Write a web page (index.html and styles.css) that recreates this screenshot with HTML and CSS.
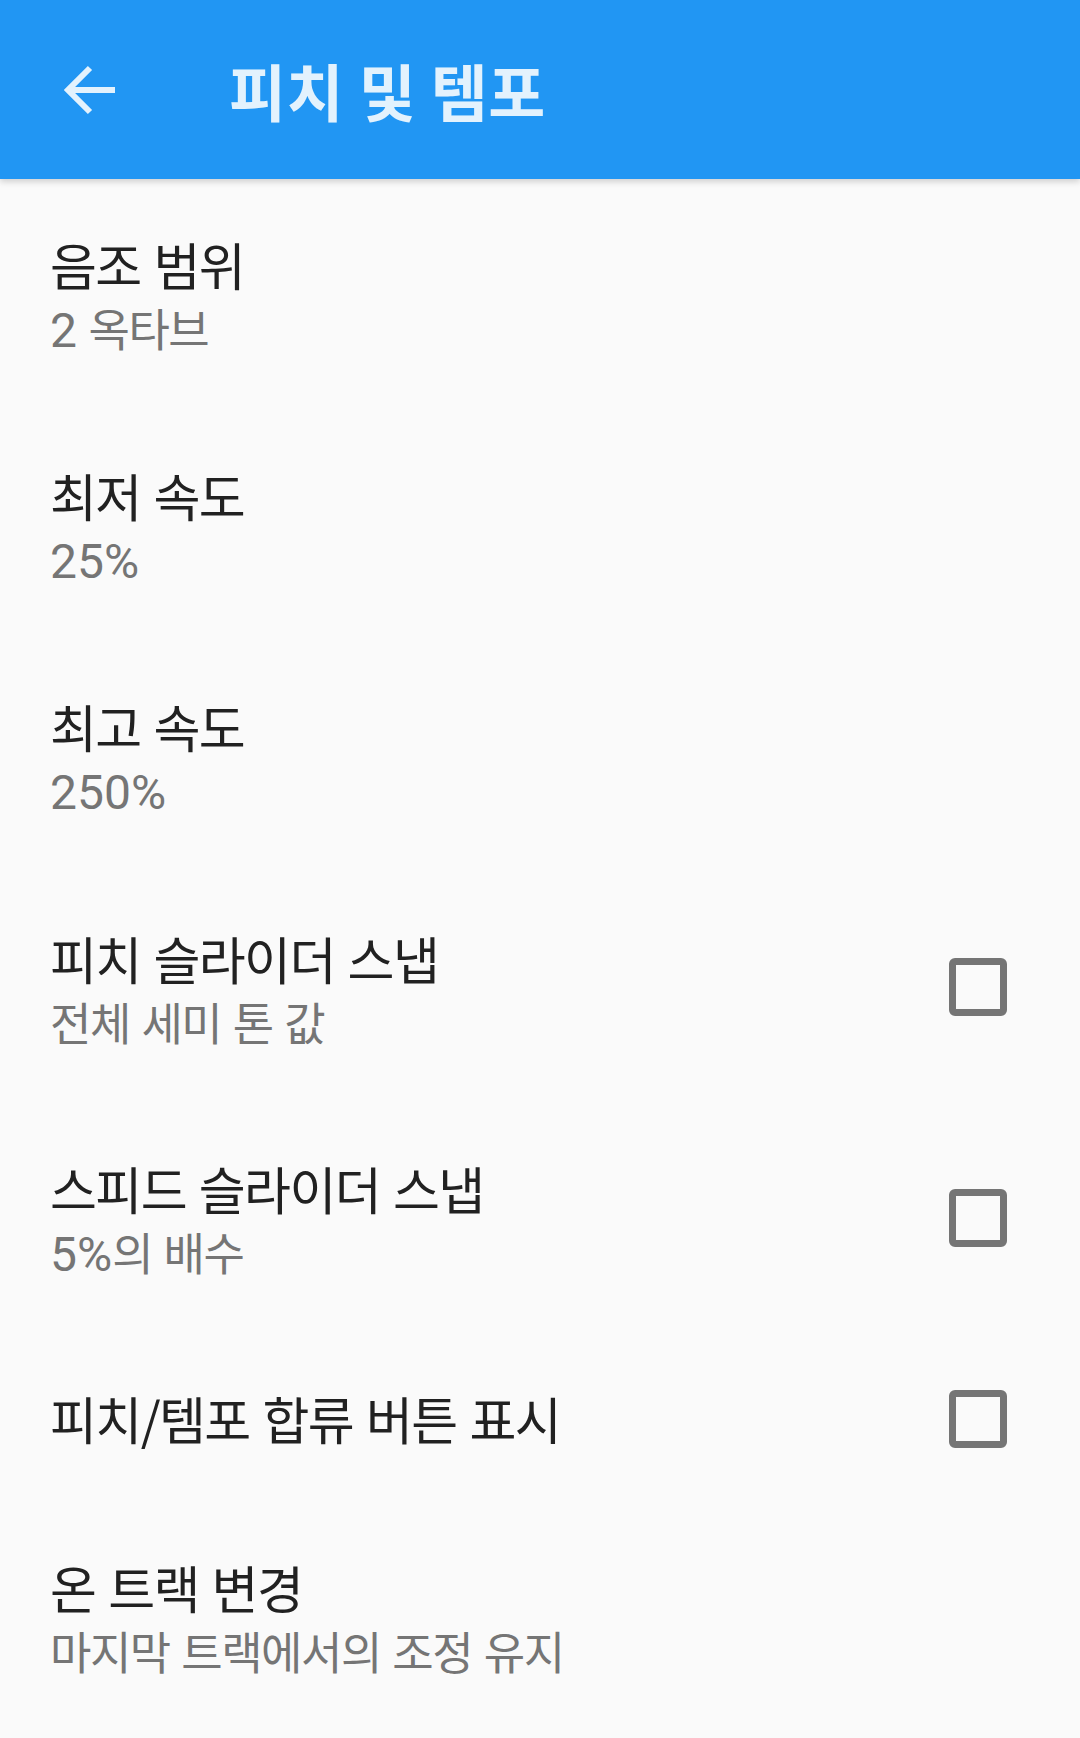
FILE: index.html
```html
<!DOCTYPE html>
<html>
	<head>
		<meta content="text/html;charset=utf-8" http-equiv="Content-Type">
		<link rel="stylesheet" href="styles.css">
	</head>
	<body>
		<div class="toolbar">
			<svg class="back" width="56" height="56" viewBox="0 0 56 56">
				<path d="M6 28H53M28 6L6 28L28 50" fill="none" stroke="#e3f2fd" stroke-width="6"/>
			</svg>
			<h1 class="title">피치 및 템포</h1>
		</div>

		<div class="list">
			<div class="pref">
				<div class="text">
					<div class="pref-title">음조 범위</div>
					<div class="pref-summary"><span class="num">2</span> 옥타브</div>
				</div>
			</div>
			<div class="pref">
				<div class="text">
					<div class="pref-title">최저 속도</div>
					<div class="pref-summary"><span class="num">25%</span></div>
				</div>
			</div>
			<div class="pref">
				<div class="text">
					<div class="pref-title">최고 속도</div>
					<div class="pref-summary"><span class="num">250%</span></div>
				</div>
			</div>
			<div class="pref">
				<div class="text">
					<div class="pref-title">피치 슬라이더 스냅</div>
					<div class="pref-summary">전체 세미 톤 값</div>
				</div>
				<span class="check"></span>
			</div>
			<div class="pref">
				<div class="text">
					<div class="pref-title">스피드 슬라이더 스냅</div>
					<div class="pref-summary"><span class="num">5%</span>의 배수</div>
				</div>
				<span class="check"></span>
			</div>
			<div class="pref single">
				<div class="text">
					<div class="pref-title">피치/템포 합류 버튼 표시</div>
				</div>
				<span class="check"></span>
			</div>
			<div class="pref">
				<div class="text">
					<div class="pref-title">온 트랙 변경</div>
					<div class="pref-summary">마지막 트랙에서의 조정 유지</div>
				</div>
			</div>
		</div>
	</body>
</html>
```

FILE: styles.css
```css
html, body {
	margin: 0;
	padding: 0;
}
body {
	width: 1080px;
	height: 1738px;
	overflow: hidden;
	background: #fafafa;
	font-family: Roboto, "Noto Sans CJK KR", sans-serif;
}
.toolbar {
	position: relative;
	height: 179px;
	background: #2196f3;
	display: flex;
	align-items: center;
	box-shadow: 0 3px 6px rgba(0, 0, 0, 0.16);
}
.back {
	margin-left: 62px;
}
.title {
	margin: 0 0 0 111px;
	color: #e3f2fd;
	font-family: "Noto Sans CJK KR", sans-serif;
	font-size: 62px;
	font-weight: 700;
	letter-spacing: 0.5px;
}
.pref {
	box-sizing: border-box;
	height: 231px;
	display: flex;
	align-items: center;
	padding: 3px 73px 0 50px;
}
.pref.single {
	height: 167px;
	padding-top: 0;
}
.text {
	flex: 1;
}
.pref-title {
	font-family: "Noto Sans CJK KR", sans-serif;
	font-size: 51px;
	line-height: 66px;
	letter-spacing: -1.6px;
	word-spacing: 3px;
	color: #212121;
}
.pref-summary {
	font-family: "Noto Sans CJK KR", sans-serif;
	font-size: 45px;
	line-height: 62px;
	letter-spacing: -1.5px;
	word-spacing: 3px;
	color: #757575;
}
.num {
	font-family: Roboto, sans-serif;
	font-size: 48px;
	letter-spacing: 0;
	word-spacing: 0;
}
.check {
	width: 44px;
	height: 44px;
	margin-top: -4px;
	border: 7px solid #757575;
	border-radius: 6px;
}
.single .check {
	margin-top: 2px;
}
```
